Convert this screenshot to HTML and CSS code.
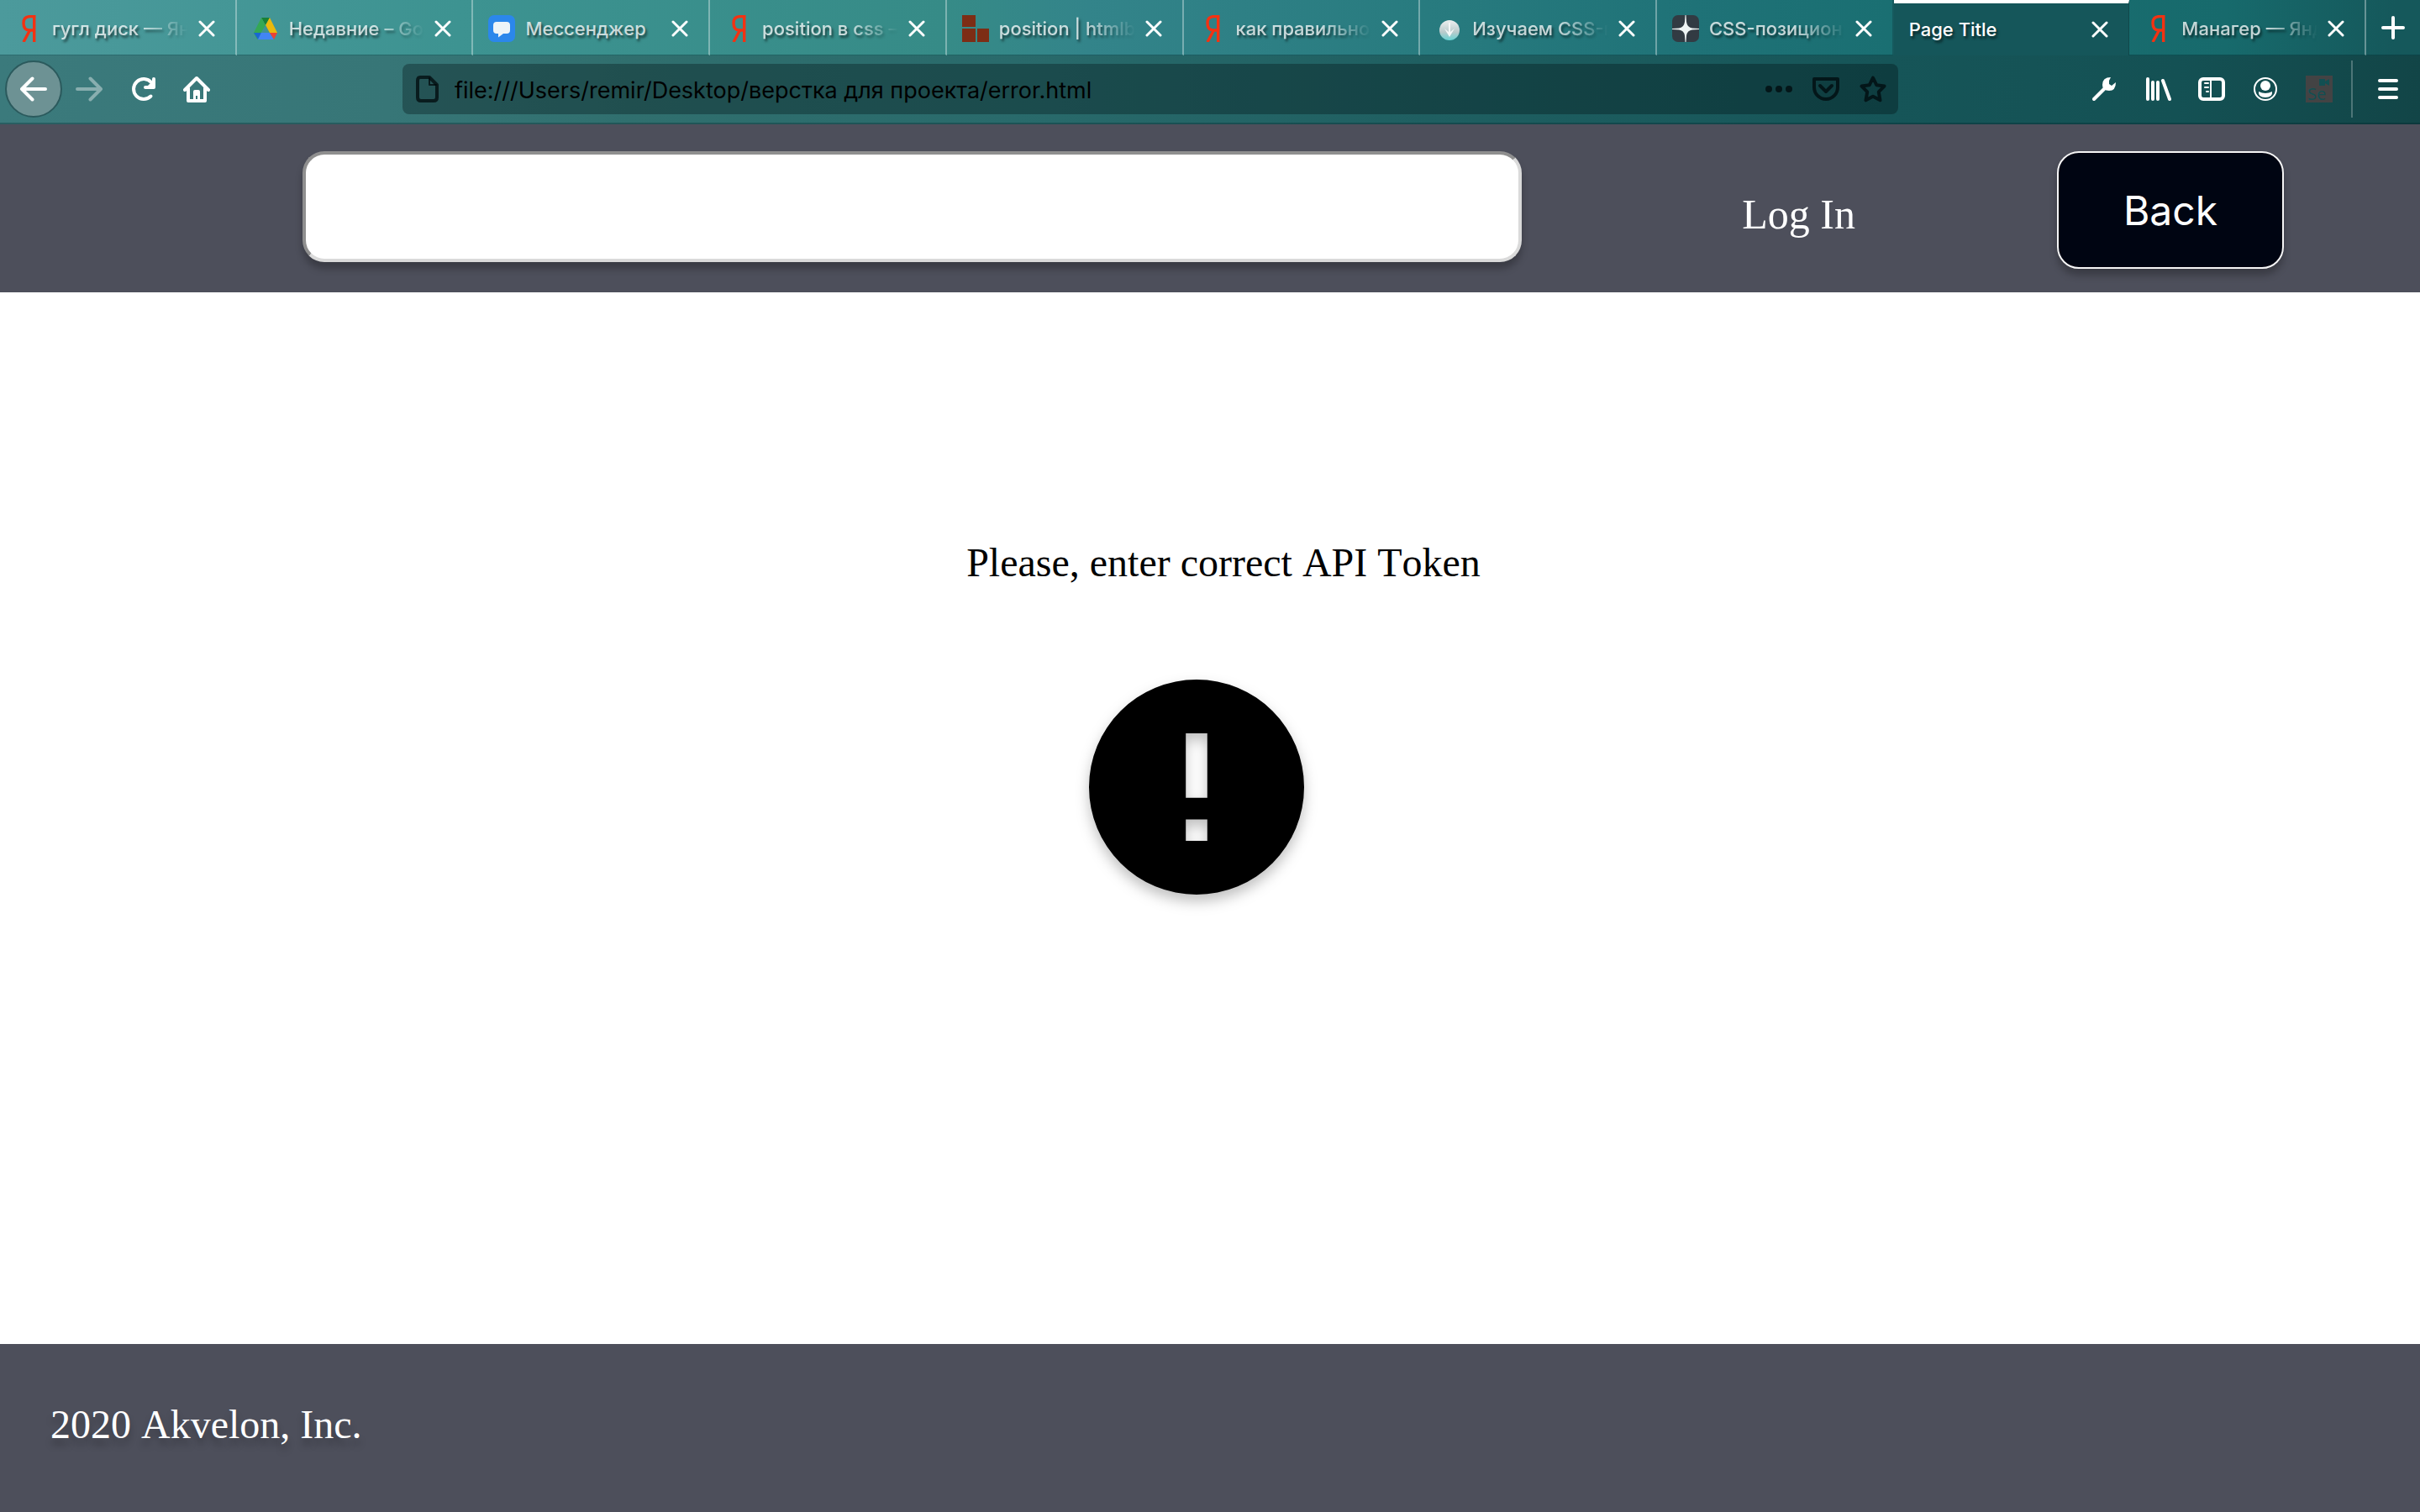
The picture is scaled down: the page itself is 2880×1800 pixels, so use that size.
FILE: index.html
```html
<!DOCTYPE html>
<html lang="ru">
<head>
<meta charset="utf-8">
<title>Page Title</title>
<link rel="stylesheet" href="styles.css">
</head>
<body>
<svg class="defs" aria-hidden="true">
  <symbol id="close" viewBox="0 0 20 20"><path d="M2 2l16 16M18 2L2 18" fill="none" stroke="currentColor" stroke-width="3" stroke-linecap="round"/></symbol>
  <symbol id="yandex" viewBox="0 0 32 32"><path d="M22.700 0V32M24.500 1.600H18C12 1.600 10 5 10 9.500c0 5.500 2.500 8.500 7 8.500h5.500M17.500 18L10 32" fill="none" stroke="#f33212" stroke-width="3.400"/></symbol>
</svg>
<div class="browser">
  <nav class="tabs" aria-label="Tabs">
    <div class="tab"><svg class="favicon"><use href="#yandex"/></svg><a class="label" href="#">гугл диск — Ян</a><button class="close" aria-label="Close"><svg><use href="#close"/></svg></button></div>
    <div class="tab"><svg class="favicon" viewBox="0 0 32 32"><path d="M11 3h10l-5 9z" fill="#188038"/><path d="M11 3l5 9-10 17-4-8z" fill="#34a853"/><path d="M21 3l9 18H20l-4-9z" fill="#eab90c"/><path d="M2 21h9l-4 8z" fill="#1967d2"/><path d="M11 21h10l5 8H7z" fill="#4285f4"/><path d="M21 21h9l-4 8z" fill="#ea4335"/><path d="M16 12l5 9H11z" fill="#3f9293"/></svg><a class="label" href="#">Недавние – Go</a><button class="close" aria-label="Close"><svg><use href="#close"/></svg></button></div>
    <div class="tab"><svg class="favicon" viewBox="0 0 32 32"><rect width="32" height="32" rx="7" fill="#2b87eb"/><path d="M10 8h12q4 0 4 4v6q0 4-4 4h-4l-6 4.500V22h-2q-4 0-4-4v-6q0-4 4-4z" fill="#edf4f8"/></svg><a class="label short" href="#">Мессенджер</a><button class="close" aria-label="Close"><svg><use href="#close"/></svg></button></div>
    <div class="tab"><svg class="favicon"><use href="#yandex"/></svg><a class="label" href="#">position в css –</a><button class="close" aria-label="Close"><svg><use href="#close"/></svg></button></div>
    <div class="tab"><svg class="favicon" viewBox="0 0 32 32"><path d="M0 0h16v14H0zM0 16h16v16H0zM18 16h14v16H18z" fill="#7d2d15"/></svg><a class="label" href="#">position | htmlb</a><button class="close" aria-label="Close"><svg><use href="#close"/></svg></button></div>
    <div class="tab"><svg class="favicon"><use href="#yandex"/></svg><a class="label" href="#">как правильно</a><button class="close" aria-label="Close"><svg><use href="#close"/></svg></button></div>
    <div class="tab"><svg class="favicon" viewBox="0 0 32 32"><defs><linearGradient id="ball" x2="0" y2="1"><stop stop-color="#eef0f0"/><stop offset=".6" stop-color="#b9cbcc"/><stop offset="1" stop-color="#66d3d4"/></linearGradient></defs><circle cx="17" cy="18" r="12" fill="url(#ball)"/><path d="M16 9h2v11l5-4-6 10-6-10 5 4z" fill="#f4f7f7"/></svg><a class="label" href="#">Изучаем CSS-п</a><button class="close" aria-label="Close"><svg><use href="#close"/></svg></button></div>
    <div class="tab"><svg class="favicon" viewBox="0 0 32 32"><rect width="32" height="32" rx="7" fill="#323b43"/><path d="M15.500 0h1l.5 8q1 7 7 7.500l8 .5v1l-8 .5q-6 .5-7 7l-.5 7.500h-1l-.5-7.500q-1-6.500-7-7L0 17v-1l8-.5q6-.5 7-7.500z" fill="#eef4f4"/></svg><a class="label" href="#">CSS-позицион</a><button class="close" aria-label="Close"><svg><use href="#close"/></svg></button></div>
    <div class="tab active"><a class="label short" href="#">Page Title</a><button class="close" aria-label="Close"><svg><use href="#close"/></svg></button></div>
    <div class="tab"><svg class="favicon"><use href="#yandex"/></svg><a class="label" href="#">Манагер — Янд</a><button class="close" aria-label="Close"><svg><use href="#close"/></svg></button></div>
    <button class="newtab" aria-label="New tab"><svg viewBox="0 0 28 28"><path d="M14 2v24M2 14h24" stroke="currentColor" stroke-width="4" stroke-linecap="round"/></svg></button>
  </nav>
  <div class="toolbar">
    <div class="group">
      <button class="tool back" aria-label="Back"><svg viewBox="0 0 32 32"><path d="M2 16h28M14.500 3.500L2 16l12.500 12.500"/></svg></button>
      <button class="tool" aria-label="Forward" disabled><svg viewBox="0 0 32 32"><path d="M2 16h28M17.500 3.500L30 16 17.500 28.500"/></svg></button>
      <button class="tool" aria-label="Reload"><svg viewBox="0 0 32 32"><path d="M25.500 24.500A12 12 0 1 1 26 8M29 4v10H19"/><path d="M29 5v9h-9z" class="solid"/></svg></button>
      <button class="tool" aria-label="Home"><svg viewBox="0 0 32 32"><path d="M2 17L16 3l14 14M6 15v15h20V15"/><path d="M12 29V19q0-2 2-2h4q2 0 2 2v10h-3v-5h-2v5z" class="solid"/></svg></button>
    </div>
    <div class="address">
      <svg class="icon" viewBox="0 0 32 32"><path d="M7 2h11l9 9v15q0 4-4 4H8q-4 0-4-4V6q0-4 3-4z"/><path d="M18 3v8h8" stroke-width="2"/></svg>
      <input class="url" aria-label="Address" value="file:///Users/remir/Desktop/верстка для проекта/error.html">
      <button class="page-action" aria-label="Page actions"><svg viewBox="0 0 32 32"><path d="M4 16h0M16 16h0M28 16h0" stroke-width="8"/></svg></button>
      <button class="page-action" aria-label="Save to Pocket"><svg viewBox="0 0 32 32"><path d="M2 4h28v10a14 14 0 0 1-28 0zM9 12l7 7 7-7" stroke-width="4"/></svg></button>
      <button class="page-action" aria-label="Bookmark"><svg viewBox="0 0 32 32"><path d="M16 2.500l4.200 8.700 9.300 1.400-6.700 6.700 1.700 10L16 24.800l-8.500 4.500 1.700-10-6.700-6.700 9.300-1.400z"/></svg></button>
    </div>
    <div class="group">
      <button class="tool" aria-label="Developer"><svg viewBox="0 0 32 32"><path d="M4 28L18 14"/><path d="M24 2q-10 0-10 9 0 7 8 7 8 0 8-10l-5 4-3-2V6z" class="solid"/></svg></button>
      <button class="tool" aria-label="Library"><svg viewBox="0 0 32 32"><path d="M4 4v24M10 8v20M16 8v20M22 6l8 22"/></svg></button>
      <button class="tool" aria-label="Sidebar"><svg viewBox="0 0 32 32"><rect x="2" y="4" width="28" height="24" rx="4"/><path d="M15 4v24M8 9h4M8 14h4M10 19h2" stroke-width="2"/></svg></button>
      <button class="tool" aria-label="Account"><svg viewBox="0 0 32 32"><circle cx="16" cy="16" r="13" stroke-width="2"/><circle cx="16" cy="12" r="6" class="solid"/><path d="M8 19q8 4 16 0 1 7-8 7t-8-7z" class="solid"/></svg></button>
      <button class="tool" aria-label="Selenium IDE"><span class="selenium">Se<svg viewBox="0 0 12 8"><path d="M0 0h7v3l5-3v8L7 5v3H0z"/></svg></span></button>
    </div>
    <button class="menu" aria-label="Menu"><svg viewBox="0 0 32 32"><path d="M6 6h20M6 16h20M6 26h20" stroke-width="4"/></svg></button>
  </div>
</div>
<header class="header">
  <input class="search" type="text" aria-label="Search">
  <a class="login" href="#">Log In</a>
  <button class="return">Back</button>
</header>
<main class="content">
  <p class="message">Please, enter correct API Token</p>
  <svg class="error" viewBox="0 0 20 20"><path d="M10 0a10 10 0 1 0 0 20 10 10 0 0 0 0-20zm1 15H9v-2h2zm0-4H9V5h2z"/></svg>
</main>
<footer class="footer">2020 Akvelon, Inc.</footer>
</body>
</html>
```
FILE: styles.css
```css
* { box-sizing: border-box; }

body {
  margin: 0;
  min-height: 100vh;
  display: flex;
  flex-direction: column;
  background: #fff;
  font-family: "Liberation Serif", serif;
  font-size: 48px;
  font-kerning: none;
}

button {
  padding: 0;
  border: 0;
  background: none;
  color: inherit;
}

svg { display: block; flex: none; }
.defs { display: none; }

/* Browser chrome */
.browser {
  color: #fff;
  font-family: Inter, sans-serif;
  background: linear-gradient(90deg, #4c9a9c, #3d9391 19%, #368b87 39%, #33848a 45%, #287b7f 59%, #1f7277 70%, #1a6f72 78%, #176a6c 92%, #15585b 99%);
}

.tabs {
  display: flex;
  height: 66px;
}

.tab {
  flex: 1 1 0;
  min-width: 0;
  display: flex;
  align-items: center;
  gap: 12px;
  padding: 2px 24px 0 18px;
  border-right: 2px solid rgba(255, 255, 255, .35);
  border-bottom: 1px solid rgba(0, 40, 45, .4);
}

.tab:nth-child(8) { border-right-color: #165a5e; }

.tab.active {
  padding-top: 0;
  border-top: 4px solid #fff;
  border-bottom: 0;
  border-right: 1px solid #10484b;
  background: #15565a;
}

.favicon { width: 32px; height: 32px; }

.label {
  flex: 1;
  overflow: hidden;
  padding: 6px 0;
  color: rgba(255, 255, 255, .75);
  font-size: 22px;
  font-weight: 500;
  line-height: 28px;
  text-decoration: none;
  text-shadow: 2px 3px 3px rgba(0, 0, 0, .55);
  white-space: nowrap;
  -webkit-mask-image: linear-gradient(90deg, #000 calc(100% - 60px), transparent);
  mask-image: linear-gradient(90deg, #000 calc(100% - 60px), transparent);
}

.label.short {
  -webkit-mask-image: none;
  mask-image: none;
}

.active .label { color: #fff; }
.close svg { width: 20px; height: 20px; }

.newtab {
  width: 64px;
  display: grid;
  place-items: center;
  border-bottom: 1px solid rgba(0, 40, 45, .4);
}

.newtab svg { width: 28px; height: 28px; }

.toolbar {
  display: flex;
  align-items: center;
  height: 82px;
  padding: 0 0 0 6px;
  border-bottom: 2px solid rgba(0, 30, 35, .3);
  background: linear-gradient(90deg, #3b7a7c, #377677 16%, #306f6e 26%, #296a6b 42%, #1f5f61 59%, #165558 78%, #145154 90%, #124547);
}

.toolbar svg {
  width: 32px;
  height: 32px;
  fill: none;
  stroke: currentColor;
  stroke-width: 4;
  stroke-linecap: round;
  stroke-linejoin: round;
}

.toolbar svg .solid { fill: currentColor; stroke: none; }

.group { display: flex; align-items: center; }

.tool {
  width: 64px;
  height: 68px;
  display: grid;
  place-items: center;
}

.tool:disabled { color: rgba(255, 255, 255, .4); }

.tool.back {
  width: 68px;
  border: 2px solid #2b5a5d;
  border-radius: 50%;
  background: #6d9294;
}

.address {
  flex: 1;
  display: flex;
  align-items: center;
  height: 60px;
  margin: 0 213px;
  padding: 0 2px 0 14px;
  border-radius: 8px;
  background: rgba(0, 12, 16, .32);
  color: rgba(0, 10, 12, .75);
}

.url {
  flex: 1;
  min-width: 0;
  height: 60px;
  margin: 0 16px;
  padding: 2px 0 0;
  border: 0;
  background: none;
  color: #000;
  font: 27px/32px Inter, sans-serif;
}

.page-action {
  width: 56px;
  height: 56px;
  display: grid;
  place-items: center;
}

.selenium {
  position: relative;
  width: 32px;
  height: 32px;
  padding: 10px 0 0 2px;
  background: #434344;
  color: #124f52;
  font: 500 20px/24px "Open Sans", sans-serif;
  text-align: left;
}

.toolbar .selenium svg {
  position: absolute;
  top: 4px;
  right: 4px;
  width: 12px;
  height: 8px;
  fill: currentColor;
  stroke: none;
}

.menu {
  width: 82px;
  height: 68px;
  display: grid;
  place-items: center;
  margin-left: 6px;
  padding-left: 4px;
  border-left: 2px solid rgba(255, 255, 255, .25);
}

/* Page */
.header {
  display: flex;
  align-items: flex-start;
  height: 200px;
  padding: 32px 162px 0 360px;
  background: #4d4f5b;
}

.search {
  flex: 1;
  height: 132px;
  padding: 0 24px;
  border: 4px solid;
  border-color: #8f8f8f #dadada #dadada #8f8f8f;
  border-radius: 26px;
  background: #fff;
  box-shadow: 0 8px 8px rgba(0, 0, 0, .25);
  font: inherit;
}

.login {
  margin: 46px 240px 0 262px;
  color: #fff;
  font-size: 50px;
  line-height: 58px;
  text-decoration: none;
}

.return {
  width: 270px;
  height: 140px;
  padding-top: 2px;
  border: 2px solid #f5f5f5;
  border-radius: 26px;
  background: #000512;
  box-shadow: 0 8px 8px rgba(0, 0, 0, .25);
  color: #fff;
  font: 48px/58px Inter, sans-serif;
}

.content {
  flex: 1;
  display: flex;
  flex-direction: column;
  align-items: center;
  padding-top: 294px;
}

.message {
  margin: 0 0 111px;
  padding-left: 32px;
  line-height: 56px;
}

.error {
  width: 256px;
  height: 256px;
  margin-right: 32px;
  overflow: visible;
  filter: drop-shadow(0 8px 8px rgba(0, 0, 0, .25));
}

.footer {
  height: 200px;
  padding: 68px 60px;
  background: #4d4f5b;
  color: #fff;
  line-height: 56px;
  text-shadow: 0 8px 8px rgba(0, 0, 0, .25);
}
```
